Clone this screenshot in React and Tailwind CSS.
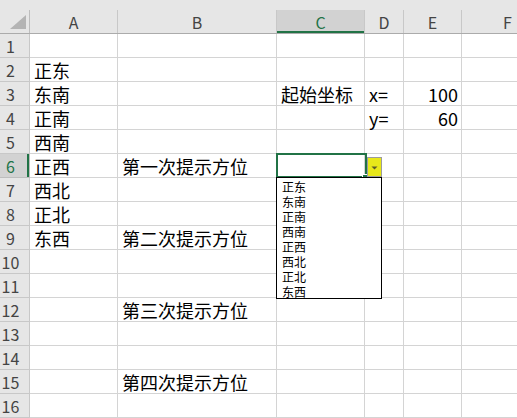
import React from "react";

const COLS = [
  { key: "A", w: "w-[88px]" },
  { key: "B", w: "w-[159px]" },
  { key: "C", w: "w-[88px]" },
  { key: "D", w: "w-[39px]" },
  { key: "E", w: "w-[58px]" },
];

const DATA = {
  2: { A: "正东" },
  3: { A: "东南", C: "起始坐标", D: "x=", E: "100" },
  4: { A: "正南", D: "y=", E: "60" },
  5: { A: "西南" },
  6: { A: "正西", B: "第一次提示方位" },
  7: { A: "西北" },
  8: { A: "正北" },
  9: { A: "东西", B: "第二次提示方位" },
  12: { B: "第三次提示方位" },
  15: { B: "第四次提示方位" },
};

const LIST = ["正东", "东南", "正南", "西南", "正西", "西北", "正北", "东西"];

const FONT = { fontFamily: '"Noto Sans CJK SC", "Liberation Sans", sans-serif' };

export default function App() {
  const rows = Array.from({ length: 16 }, (_, i) => i + 1);
  return (
    <div className="relative w-[517px] h-[418px] overflow-hidden bg-white" style={FONT}>
      <div className="h-[10px] bg-[#e6e6e6]" />
      <div className="flex h-[24px] bg-[#e6e6e6] border-b border-[#ababab]">
        <div className="relative w-[30px] shrink-0 border-r border-[#bdbdbd]">
          <svg className="absolute left-0 top-0" width="29" height="23" viewBox="0 0 29 23">
            <polygon points="26,5 26,19 10,19" fill="#b4b4b4" />
          </svg>
        </div>
        {COLS.map((c) => (
          <div
            key={c.key}
            className={`${c.w} shrink-0 flex items-center justify-center text-[16px] leading-[16px] border-r border-[#c8c8c8] ${
              c.key === "C"
                ? "bg-[#d2d2d2] text-[#217346] shadow-[inset_0_-2px_0_#217346]"
                : "text-[#444444]"
            }`}
          >
            {c.key}
          </div>
        ))}
        <div className="flex-1 flex items-center pl-[41px] text-[16px] leading-[16px] text-[#444444]">F</div>
      </div>
      {rows.map((r) => (
        <div key={r} className="flex h-[24px]">
          <div
            className={`w-[30px] shrink-0 flex items-end pb-[2px] justify-center pr-[8px] text-[16px] leading-[18px] border-r border-b ${
              r === 6
                ? "bg-[#d2d2d2] text-[#217346] border-[#bdbdbd] shadow-[inset_-2px_0_0_#217346]"
                : "bg-[#e6e6e6] text-[#444444] border-[#c8c8c8]"
            }`}
          >
            {r}
          </div>
          {COLS.map((c) => {
            const v = DATA[r] && DATA[r][c.key];
            return (
              <div
                key={c.key}
                className={`${c.w} shrink-0 flex items-end pb-[1px] px-[4px] text-[18px] leading-[20px] text-black whitespace-nowrap border-r border-b border-[#d4d4d4] ${
                  c.key === "E" ? "justify-end pr-[3px]" : ""
                }`}
              >
                {v || ""}
              </div>
            );
          })}
          <div className="flex-1 border-b border-[#d4d4d4]" />
        </div>
      ))}

      {/* active cell */}
      <div className="absolute left-[276px] top-[153px] w-[91px] h-[25px] border-2 border-[#217346]" />
      <div className="absolute left-[362px] top-[174px] w-[6px] h-[6px] bg-[#217346] border border-white" />

      {/* dropdown button */}
      <div className="absolute left-[367px] top-[157px] w-[15px] h-[20px] bg-[#e8e81a] border border-[#9c9c9c]">
        <svg width="13" height="18" viewBox="0 0 13 18" className="block">
          <polygon points="3.5,8.5 9.5,8.5 6.5,11.5" fill="#5a5a2a" />
        </svg>
      </div>

      {/* dropdown list */}
      <div className="absolute left-[276px] top-[177px] w-[106px] h-[122px] bg-white border border-black pt-[1px]">
        {LIST.map((t) => (
          <div key={t} className="h-[15px] pl-[5px] text-[12px] leading-[15px] text-black">
            {t}
          </div>
        ))}
      </div>
    </div>
  );
}
